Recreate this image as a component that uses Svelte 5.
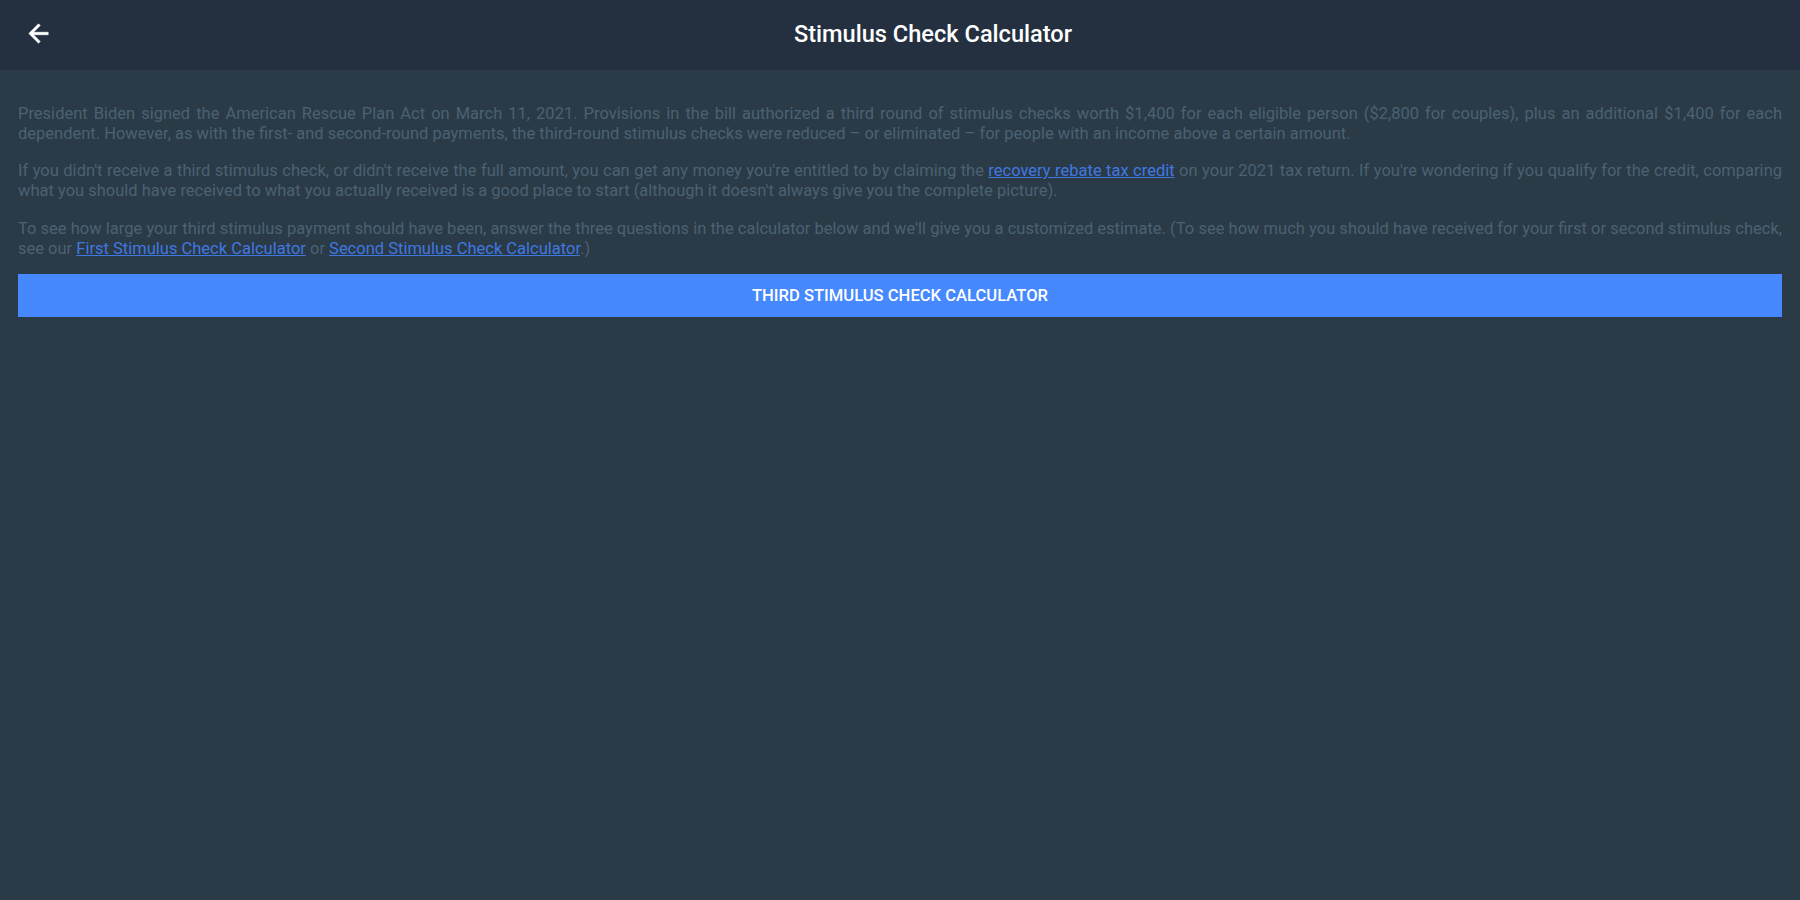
<script>
	const title = 'Stimulus Check Calculator'
</script>

<div class="page">
	<header>
		<button class="back" aria-label="Back">
			<svg width="29" height="29" viewBox="0 0 24 24">
				<path
					d="M20 11H7.83l5.59-5.59L12 4l-8 8 8 8 1.41-1.41L7.83 13H20v-2z"
					fill="#fff"
					stroke="#fff"
					stroke-width="0.5"
				/>
			</svg>
		</button>
		<h1>{title}</h1>
	</header>

	<main>
		<p>
			President Biden signed the American Rescue Plan Act on March 11, 2021. Provisions in the bill authorized a third round of stimulus checks worth $1,400 for each eligible person ($2,800 for couples), plus an additional $1,400 for each dependent. However, as with the first- and second-round payments, the third-round stimulus checks were reduced – or eliminated – for people with an income above a certain amount.
		</p>
		<p>
			If you didn't receive a third stimulus check, or didn't receive the full amount, you can get any money you're entitled to by claiming the <a href="#credit">recovery rebate tax credit</a> on your 2021 tax return. If you're wondering if you qualify for the credit, comparing what you should have received to what you actually received is a good place to start (although it doesn't always give you the complete picture).
		</p>
		<p>
			To see how large your third stimulus payment should have been, answer the three questions in the calculator below and we'll give you a customized estimate. (To see how much you should have received for your first or second stimulus check, see our <a href="#first">First Stimulus Check Calculator</a> or <a href="#second">Second Stimulus Check Calculator</a>.)
		</p>
		<button class="cta">Third Stimulus Check Calculator</button>
	</main>
</div>

<style>
	:global(body) {
		background: #2b3a47;
	}
	.page {
		min-height: 900px;
		font-family: Roboto, sans-serif;
		background: #2b3a47;
	}
	header {
		display: flex;
		align-items: center;
		height: 70px;
		background: #243040;
	}
	.back {
		display: flex;
		align-items: center;
		justify-content: center;
		width: 76px;
		height: 66px;
		padding: 0 0 3px;
		background: none;
		border: 0;
	}
	h1 {
		flex: 1;
		margin: 0 10px 0 0;
		padding-bottom: 2px;
		text-align: center;
		color: #fff;
		font-size: 23.6px;
		font-weight: 500;
	}
	main {
		padding: 34px 18px 0;
	}
	p {
		margin: 0 0 17.3px;
		color: #4a6272;
		font-size: 16.5px;
		line-height: 20px;
		text-align: justify;
	}
	a {
		color: #3f78e0;
		text-decoration: underline;
	}
	.cta {
		display: block;
		width: 100%;
		height: 43px;
		margin-top: -2px;
		background: #4688fe;
		border: 0;
		color: #fff;
		font-family: inherit;
		font-size: 16.6px;
		font-weight: 500;
		text-transform: uppercase;
	}
</style>
